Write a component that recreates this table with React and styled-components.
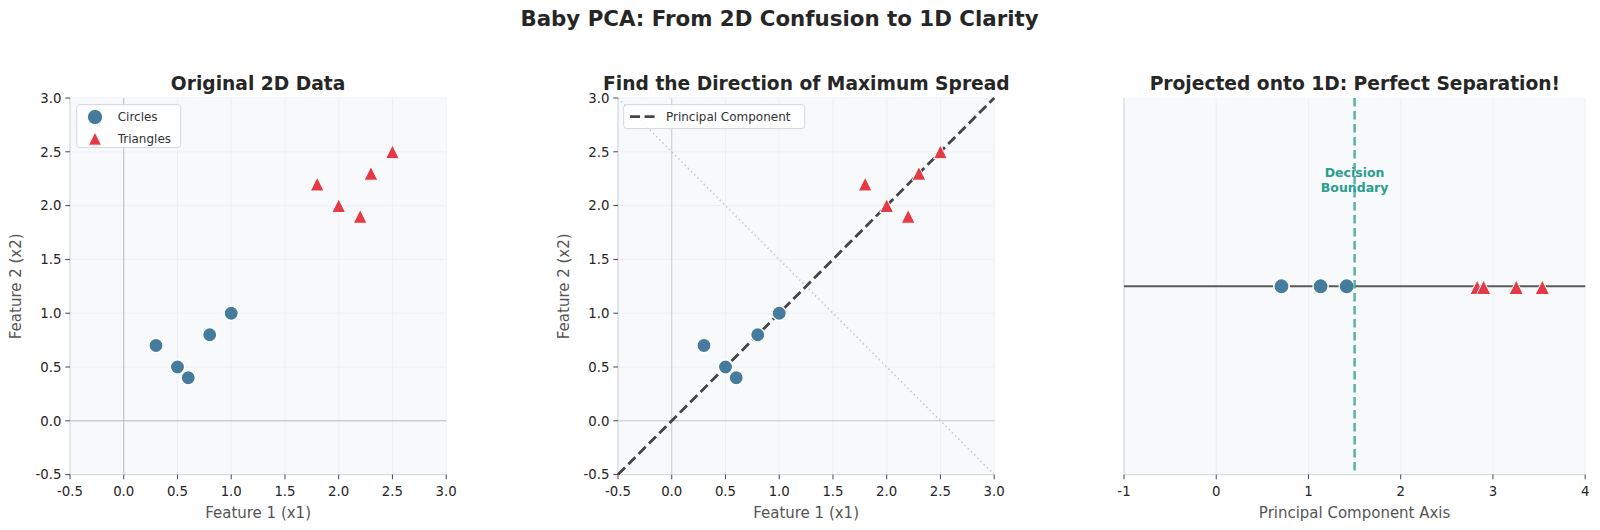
import React from 'react'
import styled, { createGlobalStyle } from 'styled-components'

const BLUE = '#457b9d'
const RED = '#e63946'
const TEAL = '#2a9d8f'
const PLOT_H = 376.6

const GlobalStyle = createGlobalStyle`
  html, body {
    margin: 0;
    padding: 0;
    background: #ffffff;
  }
  body {
    font-family: "DejaVu Sans", "Liberation Sans", sans-serif;
  }
`

const Figure = styled.main`
  width: 1600px;
  height: 530px;
  display: flex;
  flex-direction: column;
  overflow: hidden;
`

const SupTitle = styled.h1`
  margin: 0;
  height: 60px;
  box-sizing: border-box;
  padding: 4.6px 41px 0 0;
  text-align: center;
  font-size: 21.33px;
  line-height: 28px;
  font-weight: bold;
  color: #262626;
`

const Panels = styled.div`
  display: grid;
  grid-template-columns: 548.3px 506px 545.7px;
  align-items: start;
`

const Panel = styled.section`
  display: flex;
  flex-direction: column;
  padding-left: ${p => p.$gutter}px;
`

const PanelTitle = styled.h2`
  margin: 0;
  width: ${p => p.$width}px;
  height: 37.7px;
  box-sizing: border-box;
  padding-top: 13.5px;
  display: flex;
  justify-content: center;
  white-space: nowrap;
  font-size: 18.67px;
  line-height: 20px;
  font-weight: bold;
  color: #262626;
`

const ChartSvg = styled.svg`
  display: block;
  overflow: visible;
`

const GridLine = styled.line`
  stroke: #eff0f3;
  stroke-width: 1;
`

const Spine = styled.line`
  stroke: #d9dce1;
  stroke-width: 1.3;
`

const Tick = styled.line`
  stroke: #444;
  stroke-width: 1;
`

const TickLabel = styled.text`
  font-size: 13.33px;
  fill: #262626;
`

const AxisLabel = styled.text`
  font-size: 15px;
  fill: #555555;
`

const ZeroLine = styled.line`
  stroke: ${p => p.$tone};
  stroke-width: 1;
`

const LegendBox = styled.rect`
  fill: rgba(255, 255, 255, 0.85);
  stroke: #d4d6da;
  stroke-width: 1;
`

const LegendText = styled.text`
  font-size: 12px;
  fill: #333333;
`

const NoteText = styled.text`
  font-size: 12.5px;
  font-weight: bold;
  fill: ${TEAL};
`

const scale = (d0, d1, r0, r1) => v => r0 + ((v - d0) / (d1 - d0)) * (r1 - r0)

function Dot({ x, y, r }) {
  return <circle cx={x} cy={y} r={r} fill={BLUE} stroke="#fff" strokeWidth="1.3" />
}

function Tri({ x, y, s }) {
  const pts = `${x},${y - s} ${x - s},${y + s} ${x + s},${y + s}`
  return <polygon points={pts} fill={RED} stroke="#fff" strokeWidth="1" strokeLinejoin="miter" />
}

function Axes({ width, xDomain, yDomain, xTicks, yTicks, fmt, xLabel, yLabel, children }) {
  const sx = scale(xDomain[0], xDomain[1], 0, width)
  const sy = scale(yDomain[0], yDomain[1], PLOT_H, 0)
  return (
    <ChartSvg width={width} height={PLOT_H} viewBox={`0 0 ${width} ${PLOT_H}`}>
      <rect width={width} height={PLOT_H} fill="#f8f9fa" />
      {xTicks.map(t => (
        <GridLine key={'gx' + t} x1={sx(t)} x2={sx(t)} y1={0} y2={PLOT_H} />
      ))}
      {yTicks.map(t => (
        <GridLine key={'gy' + t} x1={0} x2={width} y1={sy(t)} y2={sy(t)} />
      ))}
      <Spine x1={0} y1={0} x2={0} y2={PLOT_H} />
      <Spine x1={0} y1={PLOT_H} x2={width} y2={PLOT_H} />
      {xTicks.map(t => (
        <g key={'tx' + t}>
          <Tick x1={sx(t)} x2={sx(t)} y1={PLOT_H} y2={PLOT_H + 4.7} />
          <TickLabel x={sx(t)} y={PLOT_H + 21.2} textAnchor="middle">{fmt(t)}</TickLabel>
        </g>
      ))}
      {yTicks.map(t => (
        <g key={'ty' + t}>
          <Tick x1={-4.7} x2={0} y1={sy(t)} y2={sy(t)} />
          <TickLabel x={-8.6} y={sy(t) + 4.86} textAnchor="end">{fmt(t)}</TickLabel>
        </g>
      ))}
      <AxisLabel x={width / 2} y={PLOT_H + 43} textAnchor="middle">{xLabel}</AxisLabel>
      {yLabel && (
        <AxisLabel transform="rotate(-90)" x={-PLOT_H / 2} y={-49} textAnchor="middle">
          {yLabel}
        </AxisLabel>
      )}
      {children({ sx, sy, width })}
    </ChartSvg>
  )
}

const circles = [[0.3, 0.7], [0.5, 0.5], [0.6, 0.4], [0.8, 0.8], [1.0, 1.0]]
const triangles = [[1.8, 2.2], [2.0, 2.0], [2.2, 1.9], [2.3, 2.3], [2.5, 2.5]]
const halfTicks = [-0.5, 0, 0.5, 1, 1.5, 2, 2.5, 3]
const fmt1 = t => t.toFixed(1)
const project = ([x, y]) => (x + y) / Math.SQRT2

function Scatter({ sx, sy }) {
  return (
    <g>
      {circles.map(([x, y]) => <Dot key={'c' + x} x={sx(x)} y={sy(y)} r={7.1} />)}
      {triangles.map(([x, y]) => <Tri key={'t' + x} x={sx(x)} y={sy(y)} s={6.9} />)}
    </g>
  )
}

function ZeroLines({ sx, sy, width, tone }) {
  return (
    <g>
      <ZeroLine $tone={tone} x1={0} x2={width} y1={sy(0)} y2={sy(0)} />
      <ZeroLine $tone={tone} x1={sx(0)} x2={sx(0)} y1={0} y2={PLOT_H} />
    </g>
  )
}

function OriginalPanel() {
  const w = 376.2
  return (
    <Panel $gutter={70}>
      <PanelTitle $width={w}>Original 2D Data</PanelTitle>
      <Axes width={w} xDomain={[-0.5, 3]} yDomain={[-0.5, 3]} xTicks={halfTicks} yTicks={halfTicks}
        fmt={fmt1} xLabel="Feature 1 (x1)" yLabel="Feature 2 (x2)">
        {s => (
          <g>
            <ZeroLines {...s} tone="#b8bcc4" />
            <Scatter {...s} />
            <LegendBox x={6.7} y={6.6} width={104} height={43} rx={3} />
            <circle cx={25} cy={19} r={7.6} fill={BLUE} stroke="#fff" strokeWidth="1" />
            <LegendText x={47.7} y={23.3}>Circles</LegendText>
            <Tri x={25} y={40.6} s={6.6} />
            <LegendText x={47.7} y={44.9}>Triangles</LegendText>
          </g>
        )}
      </Axes>
    </Panel>
  )
}

function DirectionPanel() {
  const w = 376.2
  return (
    <Panel $gutter={70}>
      <PanelTitle $width={w}>Find the Direction of Maximum Spread</PanelTitle>
      <Axes width={w} xDomain={[-0.5, 3]} yDomain={[-0.5, 3]} xTicks={halfTicks} yTicks={halfTicks}
        fmt={fmt1} xLabel="Feature 1 (x1)" yLabel="Feature 2 (x2)">
        {s => (
          <g>
            <ZeroLines {...s} tone="#c8ccd3" />
            <line x1={s.sx(-0.5)} y1={s.sy(3)} x2={s.sx(3)} y2={s.sy(-0.5)}
              stroke="#c0c4cb" strokeWidth="1.5" strokeDasharray="1.5 3" />
            <line x1={s.sx(-0.5)} y1={s.sy(-0.5)} x2={s.sx(3)} y2={s.sy(3)}
              stroke="#444" strokeWidth="2.8" strokeDasharray="10 4.6" />
            <Scatter {...s} />
            <LegendBox x={5.7} y={6.6} width={181} height={24} rx={3} />
            <line x1={12} x2={37} y1={18.6} y2={18.6} stroke="#444" strokeWidth="2.8" strokeDasharray="10 4.6" />
            <LegendText x={48} y={22.9}>Principal Component</LegendText>
          </g>
        )}
      </Axes>
    </Panel>
  )
}

function ProjectedPanel() {
  const w = 461.2
  return (
    <Panel $gutter={70}>
      <PanelTitle $width={w}>Projected onto 1D: Perfect Separation!</PanelTitle>
      <Axes width={w} xDomain={[-1, 4]} yDomain={[-1, 1]} xTicks={[-1, 0, 1, 2, 3, 4]} yTicks={[]}
        fmt={t => String(t)} xLabel="Principal Component Axis">
        {({ sx, sy }) => (
          <g>
            <line x1={0} x2={w} y1={sy(0)} y2={sy(0)} stroke="#5a5a5a" strokeWidth="2" />
            {circles.map(p => <Dot key={'pc' + p[0]} x={sx(project(p))} y={sy(0)} r={7.6} />)}
            {triangles.map(p => <Tri key={'pt' + p[0]} x={sx(project(p))} y={sy(0) + 1} s={7.2} />)}
            <line x1={sx(1.5)} x2={sx(1.5)} y1={0} y2={PLOT_H}
              stroke={TEAL} strokeOpacity="0.75" strokeWidth="2.6" strokeDasharray="8.5 4.5" />
            <NoteText x={sx(1.5)} y={79.3} textAnchor="middle">Decision</NoteText>
            <NoteText x={sx(1.5)} y={94.3} textAnchor="middle">Boundary</NoteText>
          </g>
        )}
      </Axes>
    </Panel>
  )
}

export default function App() {
  return (
    <Figure>
      <GlobalStyle />
      <SupTitle>Baby PCA: From 2D Confusion to 1D Clarity</SupTitle>
      <Panels>
        <OriginalPanel />
        <DirectionPanel />
        <ProjectedPanel />
      </Panels>
    </Figure>
  )
}
